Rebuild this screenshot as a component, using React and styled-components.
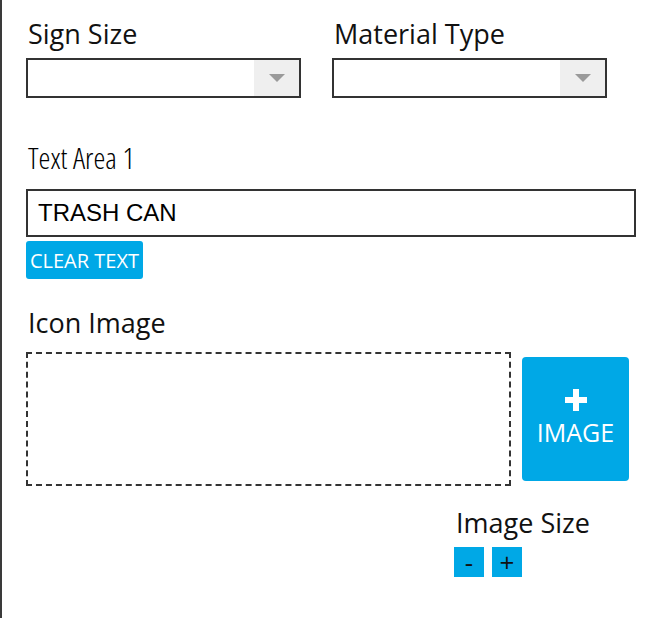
import React from 'react';
import styled, { createGlobalStyle } from 'styled-components';

const GlobalStyle = createGlobalStyle`
    body {
        margin: 0;
        background: #fff;
        font-family: "Open Sans", "Liberation Sans", sans-serif;
    }
`;

const Page = styled.div`
    min-height: 618px;
    box-sizing: border-box;
    border-left: 2px solid #3a3a3a;
    padding: 16px 0 0 24px;
`;

const Row = styled.div`
    display: flex;
    gap: 31px;
`;

const Field = styled.div`
    display: flex;
    flex-direction: column;
    width: ${p => p.$width || 'auto'};
    margin-top: ${p => p.$top || 0}px;
    margin-left: ${p => p.$left || 0}px;
`;

const Label = styled.div`
    font-size: 27px;
    line-height: 36px;
    color: #111;
    margin-left: 2px;
`;

const CondensedLabel = styled(Label)`
    font-size: 30px;
    font-weight: 300;
    font-stretch: condensed;
    color: #000;
`;

const Select = styled.div`
    margin-top: 6px;
    height: 40px;
    box-sizing: border-box;
    border: 2px solid #333;
    display: flex;
    justify-content: flex-end;
`;

const Arrow = styled.div`
    width: 45px;
    background: #efefef;
    display: flex;
    align-items: center;
    justify-content: center;

    &::after {
        content: '';
        border-left: 8px solid transparent;
        border-right: 8px solid transparent;
        border-top: 8px solid #9a9a9a;
    }
`;

const TextInput = styled.div`
    margin-top: 13px;
    width: 610px;
    height: 48px;
    box-sizing: border-box;
    border: 2px solid #333;
    padding-left: 10px;
    display: flex;
    align-items: center;
    font-family: "Liberation Sans", Arial, sans-serif;
    font-size: 24px;
    color: #000;
`;

const BlueButton = styled.button`
    background: #00a8e6;
    border: none;
    color: #fff;
    font-family: "Open Sans", sans-serif;
    cursor: pointer;
    padding: 0;
`;

const ClearButton = styled(BlueButton)`
    margin-top: 4px;
    align-self: flex-start;
    height: 38px;
    width: 117px;
    border-radius: 3px;
    font-size: 20px;
`;

const ImageRow = styled.div`
    margin-top: 11px;
    display: flex;
    align-items: center;
    gap: 11px;
`;

const DropZone = styled.div`
    width: 485px;
    height: 134px;
    box-sizing: border-box;
    border: 2px dashed #333;
`;

const AddImage = styled(BlueButton)`
    width: 107px;
    height: 124px;
    border-radius: 4px;
    font-size: 25px;
    display: flex;
    flex-direction: column;
    align-items: center;
    justify-content: center;
    gap: 4px;
`;

const SizeButtons = styled.div`
    margin-top: 6px;
    display: flex;
    gap: 8px;
`;

const SizeButton = styled(BlueButton)`
    width: 30px;
    height: 30px;
    color: #111;
    font-size: 26px;
    line-height: 30px;
`;

const Plus = () => (
    <svg width="22" height="22" viewBox="0 0 22 22">
        <path d="M8 0h6v8h8v6h-8v8H8v-8H0V8h8z" fill="#fff" />
    </svg>
);

export default function App() {
    return (
        <>
            <GlobalStyle />
            <Page>
                <Row>
                    <Field $width="275px">
                        <Label>Sign Size</Label>
                        <Select><Arrow /></Select>
                    </Field>
                    <Field $width="275px">
                        <Label>Material Type</Label>
                        <Select><Arrow /></Select>
                    </Field>
                </Row>

                <Field $top={42}>
                    <CondensedLabel>Text Area 1</CondensedLabel>
                    <TextInput>TRASH CAN</TextInput>
                    <ClearButton>CLEAR TEXT</ClearButton>
                </Field>

                <Field $top={26}>
                    <Label>Icon Image</Label>
                    <ImageRow>
                        <DropZone />
                        <AddImage>
                            <Plus />
                            IMAGE
                        </AddImage>
                    </ImageRow>
                </Field>

                <Field $top={19} $left={428}>
                    <Label>Image Size</Label>
                    <SizeButtons>
                        <SizeButton>-</SizeButton>
                        <SizeButton>+</SizeButton>
                    </SizeButtons>
                </Field>
            </Page>
        </>
    );
}
